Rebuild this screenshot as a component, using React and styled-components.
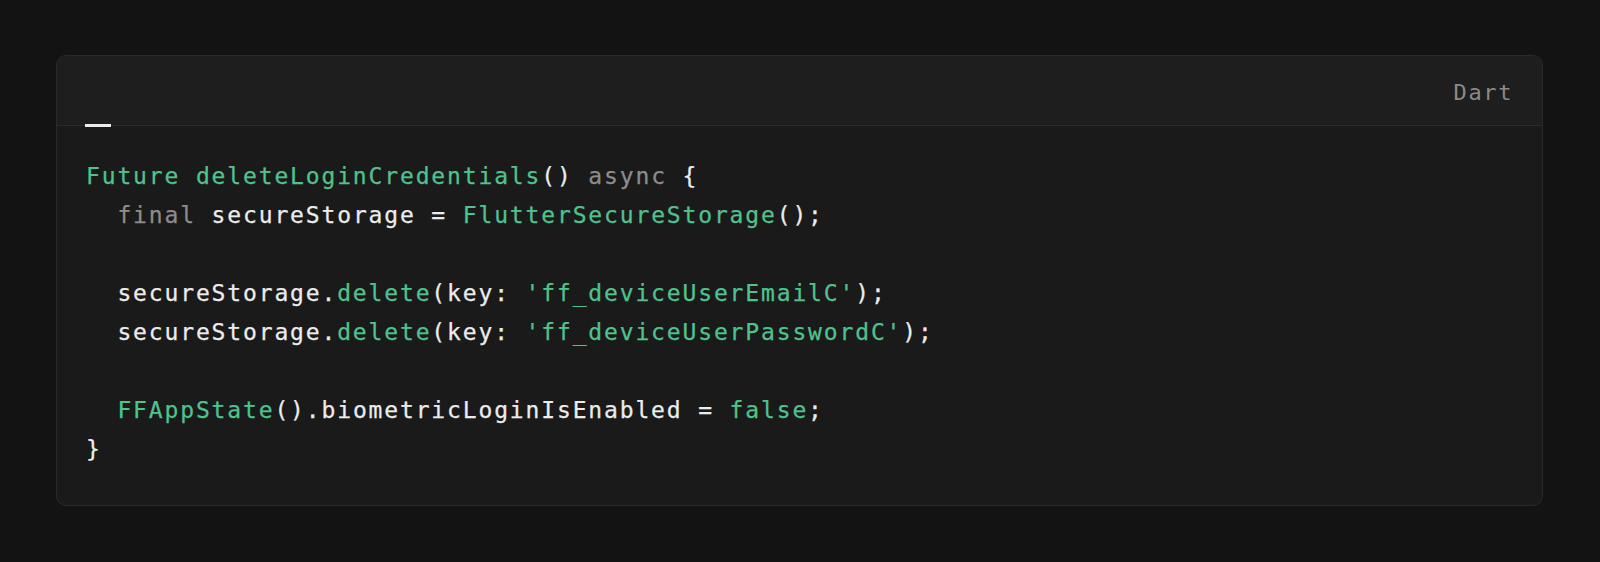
import React from "react";
import styled, { createGlobalStyle } from "styled-components";

const GlobalStyle = createGlobalStyle`
  html, body {
    margin: 0;
    padding: 0;
    background: #131313;
  }
`;

const Page = styled.div`
  min-height: 562px;
  box-sizing: border-box;
  padding: 55px 57px 0 56px;
  background: #131313;
`;

const Card = styled.div`
  background: #1a1a1a;
  border: 1px solid #2a2a2a;
  border-radius: 10px;
  overflow: hidden;
`;

const Header = styled.div`
  display: flex;
  align-items: center;
  justify-content: space-between;
  height: 70px;
  box-sizing: border-box;
  padding: 0 29px 0 28px;
  background: #1e1e1e;
  border-bottom: 1px solid #2c2c2c;
`;

const Tab = styled.div`
  align-self: flex-end;
  width: 26px;
  height: 3px;
  margin-bottom: -2px;
  background: #ececec;
`;

const Lang = styled.span`
  margin-top: 4px;
  font-family: "DejaVu Sans Mono", monospace;
  font-size: 22px;
  letter-spacing: 1.6px;
  color: #8a8a8a;
`;

const Code = styled.pre`
  margin: 0;
  padding: 31px 28px 36px 29px;
  font-family: "DejaVu Sans Mono", monospace;
  font-size: 23px;
  letter-spacing: 1.85px;
  line-height: 39px;
  color: #ececec;
  -webkit-text-stroke: 0.25px currentColor;
`;

const colors = {
  fn: "#4fc28e",
  kw: "#8c8c8c",
  plain: "#ececec",
};

const Tok = styled.span`
  color: ${(p) => colors[p.$kind] || colors.plain};
`;

export default function App() {
  return (
    <>
      <GlobalStyle />
      <Page>
        <Card>
          <Header>
            <Tab />
            <Lang>Dart</Lang>
          </Header>
          <Code>
            <Tok $kind="fn">Future</Tok> <Tok $kind="fn">deleteLoginCredentials</Tok>(){" "}
            <Tok $kind="kw">async</Tok> {"{"}
            {"\n  "}
            <Tok $kind="kw">final</Tok> secureStorage = <Tok $kind="fn">FlutterSecureStorage</Tok>();
            {"\n\n  "}
            secureStorage.<Tok $kind="fn">delete</Tok>(key: <Tok $kind="fn">'ff_deviceUserEmailC'</Tok>);
            {"\n  "}
            secureStorage.<Tok $kind="fn">delete</Tok>(key: <Tok $kind="fn">'ff_deviceUserPasswordC'</Tok>);
            {"\n\n  "}
            <Tok $kind="fn">FFAppState</Tok>().biometricLoginIsEnabled = <Tok $kind="fn">false</Tok>;
            {"\n"}
            {"}"}
          </Code>
        </Card>
      </Page>
    </>
  );
}
